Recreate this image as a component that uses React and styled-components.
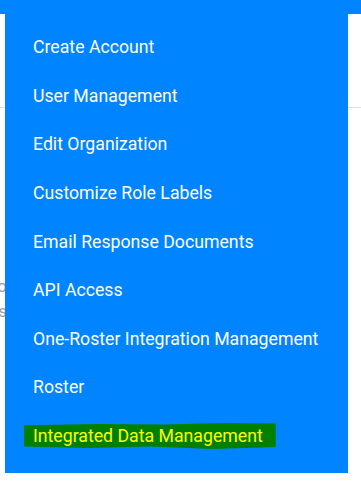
import React from "react";
import styled, { createGlobalStyle } from "styled-components";

const Global = createGlobalStyle`
  html, body { margin: 0; padding: 0; background: #fff; }
  body { font-family: Roboto, "Liberation Sans", sans-serif; width: 361px; height: 484px; overflow: hidden; }
`;

const Page = styled.div`
  position: relative;
  width: 361px;
  height: 484px;
  background: #fff;
`;

const TopBar = styled.div`
  height: 14px;
  background: #0084ff;
`;

const Header = styled.div`
  height: 93px;
  border-bottom: 1px solid #e0e0e0;
`;

const Content = styled.div`
  padding-top: 166px;
`;

const Clipped = styled.div`
  width: 7px;
  overflow: hidden;
  direction: rtl;
  white-space: nowrap;
  color: #9e9e9e;
  font-size: 17px;
  line-height: 25px;
`;

const Menu = styled.ul`
  position: absolute;
  top: 0;
  left: 5px;
  width: 343px;
  height: 473px;
  box-sizing: border-box;
  margin: 0;
  padding: 23px 0 13px;
  list-style: none;
  background: #0084ff;
`;

const Item = styled.li`
  height: 48.6px;
  display: flex;
  align-items: center;
  padding-left: ${(p) => (p.$highlight ? "19px" : "28px")};
  color: ${(p) => (p.$highlight ? "#ffff00" : "#ffffff")};
  font-size: 17.7px;
  font-weight: 400;
`;

const Mark = styled.span`
  display: inline-block;
  background: #008000;
  padding: 3px 13px 3px 9px;
  line-height: 20px;
  clip-path: polygon(0 8%, 30% 4%, 55% 6%, 80% 0, 100% 2%, 100% 92%, 75% 100%, 50% 90%, 25% 96%, 0 90%);
`;

const items = [
  "Create Account",
  "User Management",
  "Edit Organization",
  "Customize Role Labels",
  "Email Response Documents",
  "API Access",
  "One-Roster Integration Management",
  "Roster",
];

export default function App() {
  return (
    <>
      <Global />
      <Page>
        <TopBar />
        <Header />
        <Content>
          <Clipped>
            <div>Info</div>
            <div>Details</div>
          </Clipped>
        </Content>
        <Menu>
          {items.map((t) => (
            <Item key={t}>{t}</Item>
          ))}
          <Item $highlight>
            <Mark>Integrated Data Management</Mark>
          </Item>
        </Menu>
      </Page>
    </>
  );
}
